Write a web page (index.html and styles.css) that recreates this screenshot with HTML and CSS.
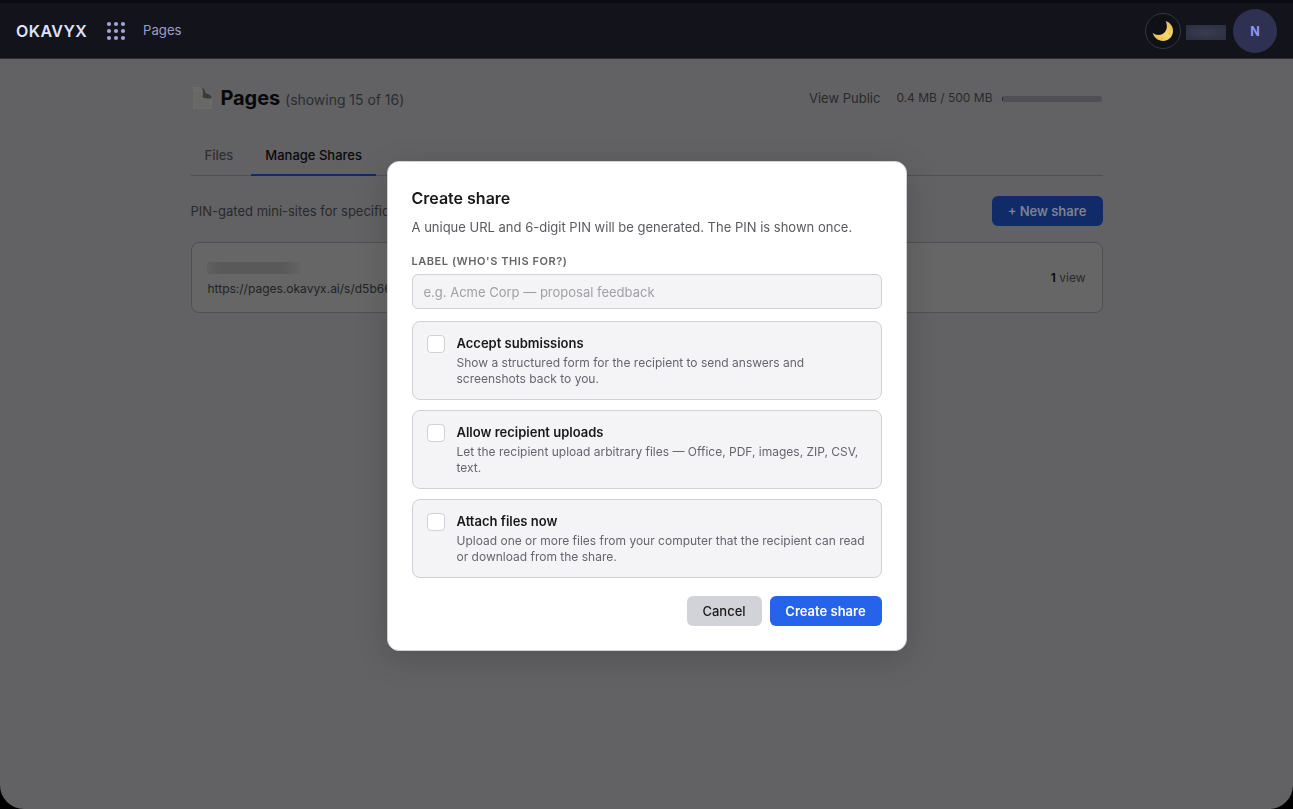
FILE: index.html
```
<!DOCTYPE html>
<html lang="en">
<head>
<meta charset="utf-8">
<title>Pages</title>
<link rel="stylesheet" href="styles.css">
</head>
<body>
<div class="app">
  <header class="topbar">
    <span class="brand">OKAVYX</span>
    <svg class="grid-icon" width="20" height="20" viewBox="0 0 20 20">
      <circle cx="3" cy="3" r="2.1"/><circle cx="10" cy="3" r="2.1"/><circle cx="17" cy="3" r="2.1"/>
      <circle cx="3" cy="10" r="2.1"/><circle cx="10" cy="10" r="2.1"/><circle cx="17" cy="10" r="2.1"/>
      <circle cx="3" cy="17" r="2.1"/><circle cx="10" cy="17" r="2.1"/><circle cx="17" cy="17" r="2.1"/>
    </svg>
    <span class="crumb">Pages</span>
    <div class="account">
      <button class="theme" aria-label="Theme">
        <svg width="22" height="22" viewBox="0 0 22 22">
          <defs><linearGradient id="moon" x1="1" y1="0" x2="0" y2="1"><stop offset="0" stop-color="#e5b94f"/><stop offset=".5" stop-color="#f5d86b"/><stop offset="1" stop-color="#e3b549"/></linearGradient></defs>
          <path fill="url(#moon)" d="M13.600 1C18.300 2.400 21.400 6.700 21 11.500C20.600 17 16.300 21 11 21C6.200 21 2.100 17.800 .6 12.800C4 15.800 9 15.800 12.200 12.800C15.300 9.900 15.700 5.200 13.600 1Z"/>
          <circle cx="17.500" cy="14" r=".8" fill="#dcae48"/><circle cx="10" cy="18.500" r=".8" fill="#dcae48"/>
        </svg>
      </button>
      <span class="user-mask"></span>
      <span class="avatar">N</span>
    </div>
  </header>

  <main class="content">
    <div class="title-row">
      <svg class="page-icon" width="20" height="23" viewBox="0 0 20 23">
        <path d="M0 0H9L19 11V22H0Z" fill="#6a6a69"/>
        <path d="M8 0C10 1 12.500 3 12.800 6.200C15 6.500 18 8 19 11C15 12 11 11.500 9.500 10C10.500 6 10 2 8 0Z" fill="#3b3b3c"/>
        <path d="M2 13H17M2 16H17M2 19H17M2 10H8M2 7H8" stroke="#626261" stroke-width=".6"/>
      </svg>
      <h1>Pages</h1>
      <span class="count">(showing 15 of 16)</span>
      <div class="usage">
        <span class="public">View Public</span>
        <span class="quota">0.4 MB / 500 MB</span>
        <span class="meter"><span class="meter-fill"></span></span>
      </div>
    </div>
    <nav class="tabs">
      <span class="tab">Files</span>
      <span class="tab active">Manage Shares</span>
    </nav>
    <div class="share-bar">
      <span class="hint">PIN-gated mini-sites for specific people</span>
      <button class="new-share">+ New share</button>
    </div>
    <section class="share-card">
      <div class="share-info">
        <div class="name-mask"></div>
        <div class="url">https://pages.okavyx.ai/s/d5b66</div>
      </div>
      <div class="views"><b>1</b> view</div>
    </section>
  </main>
</div>

<div class="modal-layer">
  <form class="modal">
    <h2>Create share</h2>
    <p class="lead">A unique URL and 6-digit PIN will be generated. The PIN is shown once.</p>
    <label class="field-label" for="label">LABEL (WHO'S THIS FOR?)</label>
    <input class="field" id="label" placeholder="e.g. Acme Corp — proposal feedback">
    <div class="options">
      <label class="option"><input type="checkbox" class="check"><span><strong>Accept submissions</strong><small>Show a structured form for the recipient to send answers and<br>screenshots back to you.</small></span></label>
      <label class="option"><input type="checkbox" class="check"><span><strong>Allow recipient uploads</strong><small>Let the recipient upload arbitrary files — Office, PDF, images, ZIP, CSV,<br>text.</small></span></label>
      <label class="option"><input type="checkbox" class="check"><span><strong>Attach files now</strong><small>Upload one or more files from your computer that the recipient can read<br>or download from the share.</small></span></label>
    </div>
    <div class="actions">
      <button type="button" class="btn cancel">Cancel</button>
      <button type="button" class="btn create">Create share</button>
    </div>
  </form>
</div>
</body>
</html>
```
FILE: styles.css
```
* { box-sizing: border-box; }
html { background: #000; }
body { margin: 0; height: 809px; overflow: hidden; font-family: Inter, "Liberation Sans", sans-serif; font-size: 13px; }
button, input { font: inherit; }
.app { height: 809px; background: #626264; border-radius: 0 0 24px 24px; overflow: hidden; }

.topbar { height: 59px; padding: 1px 16px 0; display: flex; align-items: center; background: #13131c; border-top: 3px solid #0a0a14; border-bottom: 1px solid #303038; }
.brand { font-size: 16px; font-weight: 600; letter-spacing: .45px; color: #dfe2fb; width: 90px; }
.grid-icon { fill: #a0a5d2; }
.crumb { margin-left: 17px; margin-bottom: 2px; font-size: 13.200px; color: #989fc9; }
.account { margin-left: auto; display: flex; align-items: center; }
.theme { width: 36px; height: 36px; padding: 0; border: 1px solid #363640; border-radius: 50%; background: #101017; display: grid; place-items: center; }
.user-mask { width: 40px; height: 15px; margin: 3px 7px 0 5px; background: radial-gradient(ellipse, #3a3d50, #2b2e40); }
.avatar { width: 44px; height: 44px; border-radius: 50%; background: #2e3152; color: #8f96f5; font-size: 12.500px; font-weight: 700; display: grid; place-items: center; }

.content { width: 912px; margin: 0 auto; padding-top: 24px; }
.title-row { height: 30px; display: flex; align-items: center; }
.page-icon { margin-left: 2px; }
h1 { margin: 0 6px 0 8px; font-size: 20px; line-height: 30px; font-weight: 700; letter-spacing: -.1px; color: #08080a; }
.count { font-size: 14px; letter-spacing: -.03px; color: #2c2c2f; padding-top: 3px; margin-left: -1px; }
.usage { margin-left: auto; margin-right: 1px; display: flex; align-items: center; color: #29292c; }
.public { margin-right: 16px; }
.quota { font-size: 12px; margin-right: 9px; margin-bottom: 1px; }
.meter { width: 100px; height: 6px; border-radius: 3px; background: #505054; overflow: hidden; margin-top: 2px; }
.meter-fill { display: block; width: 1px; height: 6px; background: #0f285e; }
.tabs { display: flex; height: 38px; margin-top: 25px; border-bottom: 1px solid #505054; }
.tab { height: 38px; padding: 9px 14px; font-weight: 500; line-height: 16px; color: #2f2f33; margin-right: 4px; }
.tab.active { color: #09090b; border-bottom: 2px solid #0f2c6a; }
.share-bar { display: flex; justify-content: space-between; align-items: center; height: 30px; margin-top: 20px; color: #29292c; }
.new-share { width: 111px; height: 30px; padding: 0; border: 0; border-radius: 6px; background: #102b68; color: #7c8190; font-weight: 600; }
.share-card { height: 71px; margin-top: 16px; padding: 0 16px; border: 1px solid #505054; border-radius: 8px; background: #666; display: flex; align-items: center; justify-content: space-between; }
.share-info { padding-top: 3px; }
.name-mask { width: 94px; height: 12px; margin-bottom: 7px; margin-left: -1px; background: linear-gradient(90deg, #606060, #595959 15%, #595959 80%, #646464); }
.url { font-size: 12px; line-height: 16px; color: #222225; }
.views { font-size: 12px; color: #29292c; }
.views b { color: #08080a; font-weight: 600; }

.modal-layer { position: fixed; inset: 0; display: flex; justify-content: center; align-items: flex-start; padding-top: 161px; }
.modal { width: 520px; height: 490px; padding: 24px; border: 1px solid #d0d0d5; border-radius: 12px; background: #fff; box-shadow: 0 8px 32px rgba(0,0,0,.16); }
h2 { margin: 2px 0 9px; font-size: 16px; line-height: 20px; font-weight: 600; color: #18181b; }
.lead { margin: 0 0 17px; line-height: 20px; color: #5a5a60; white-space: nowrap; }
.field-label { display: block; font-size: 11px; line-height: 14px; font-weight: 600; letter-spacing: .55px; color: #65656c; margin-bottom: 6px; }
.field { display: block; width: 100%; height: 35px; padding: 1px 11px 0; border: 1px solid #d0d0d5; border-radius: 6px; background: #f4f4f6; }
.field::placeholder { color: #a0a0a6; opacity: 1; }
.options { display: grid; gap: 10px; margin-top: 12px; }
.option { height: 79px; display: flex; gap: 12px; padding: 13px 14px; border: 1px solid #d0d0d5; border-radius: 8px; background: #f4f4f6; }
.check { appearance: none; flex: none; width: 18px; height: 18px; margin: 0; border: 1px solid #d0d0d5; border-radius: 4px; background: #fff; }
.option strong { display: block; font-size: 13px; line-height: 16px; font-weight: 600; color: #18181b; margin-bottom: 4px; }
.option small { display: block; font-size: 12px; line-height: 16px; color: #65656c; white-space: nowrap; }
.actions { display: flex; justify-content: flex-end; gap: 8px; margin-top: 18px; }
.btn { height: 30px; padding: 0; border: 0; border-radius: 6px; }
.cancel { width: 75px; background: #d2d2d9; color: #18181b; font-weight: 500; }
.create { width: 112px; background: #2563eb; color: #fff; font-weight: 600; }
```
